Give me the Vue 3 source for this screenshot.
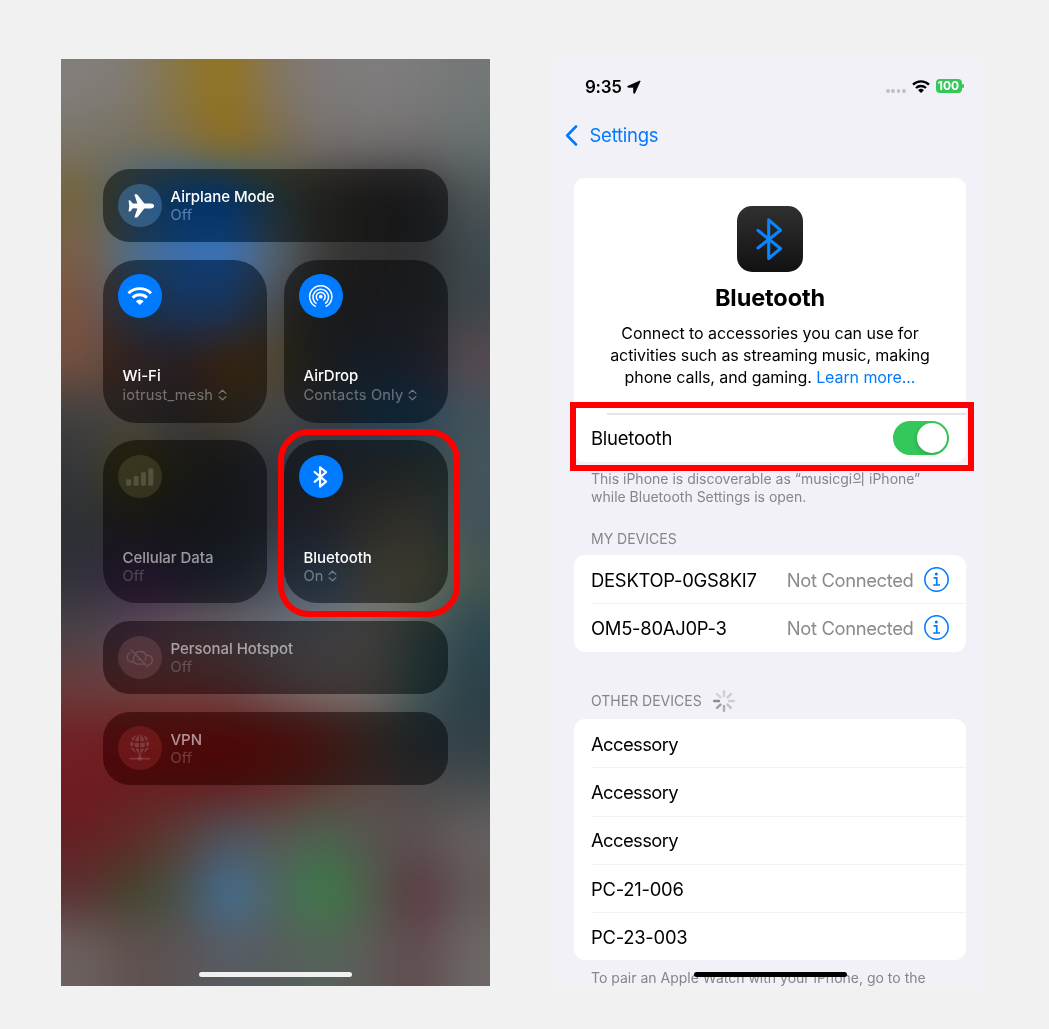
<script setup>
const palette = [
  '827e7a 807b72 887540 94731a 827664 7e7a7a 7f7c7c 7c7b7b 737777',
  '7a7468 75705f 80704b 906e18 7c6c4c 767070 757171 726f6f 687070',
  '74643c 46647a 1f5c9c 1a5aa2 46585a 3e3c34 2f2f2f 2d2e31 4e5557',
  '7a6048 50708a 3c70b0 3c76be 5a6670 3c3a38 323232 303032 3e4a4f',
  '7a5340 46607c 3e669a 3f669c 4e4c4a 323232 303236 323436 3c464a',
  '75503f 54433f 483c40 64442c 50462e 32343a 2e3640 343846 58494f',
  '42403e 484644 3a363c 474030 46484c 3a3d42 28445a 284860 43525a',
  '34363a 464018 32312c 2a2c2f 333842 30363e 3a3e42 3e4340 43555b',
  '2e3034 302e2e 282a2d 282b30 34363e 3c3e44 56544f 62605a 40525a',
  '30303a 3a2848 342c40 2c3844 4a4e5a 46607a 706e66 76725e 46564f',
  '4a4248 5a4858 6a5660 6c6268 6c6e78 78787c 7c7a78 505e5e 2c4850',
  '6a3c3c 6a4240 6e4443 6c4848 706060 7a7272 78726e 445a5a 2c4048',
  '701f26 701c1c 741a1a 701616 6b1e1c 642c26 50443e 3a4248 304046',
  '701a20 6a1e20 661e20 642020 642c2a 603c38 5c4a48 504c4a 4a4e50',
  '662024 602a28 584038 4e5662 585854 486650 585450 5a4f4f 666060',
  '5a3032 40462c 48504a 40709c 506460 388044 505c4c 5c3440 605a58',
  '6b605e 5e504e 5c5354 565c64 585c5c 546458 5e5a58 604a4e 6c6766',
].map((r) => r.split(' '))

const cw = 429 / 9
const ch = 927 / 17
// The dock rows sit a little higher than the regular grid.
const top = (r) => r * ch - (r >= 14 ? 12 : 0)
const cells = palette.flatMap((row, r) =>
  row.map((fill, c) => {
    const l = c === 0 ? -90 : c * cw
    const t = r === 0 ? -90 : top(r)
    const rr = c === 8 ? 519 : (c + 1) * cw + 1
    const b = r === 16 ? 1017 : top(r + 1) + 1
    return { x: l, y: t, w: rr - l, h: b - t, fill: '#' + fill }
  })
)

const devices = ['DESKTOP-0GS8KI7', 'OM5-80AJ0P-3']
const others = ['Accessory', 'Accessory', 'Accessory', 'PC-21-006', 'PC-23-003']
const spokes = [0.13, 0.15, 0.14, 0.2, 0.27, 0.34, 0.42, 0.13]
</script>

<template>
  <main class="page">
    <section class="phone control">
      <svg class="wall" viewBox="0 0 429 927" width="429" height="927">
        <defs>
          <filter id="soft" filterUnits="userSpaceOnUse" x="-90" y="-90" width="609" height="1107" color-interpolation-filters="sRGB">
            <feGaussianBlur stdDeviation="23" />
          </filter>
        </defs>
        <g filter="url(#soft)">
          <rect v-for="(c, i) in cells" :key="i" :x="c.x" :y="c.y" :width="c.w" :height="c.h" :fill="c.fill" />
        </g>
      </svg>

      <div class="tiles">
        <div class="tile wide">
          <span class="orb air">
            <svg viewBox="0 0 44 44"><path fill="#fff" d="M36.600 22.200c0-1.700-1.900-2.500-3.700-2.500h-6.300L19.900 11.100c-.4-.5-.8-.7-1.300-.7h-1.200c-.6 0-.8.4-.6 1l2.800 8.200-4.600.2-2.400-2.900c-.2-.3-.5-.4-.8-.4h-.5c-.4 0-.6.3-.6.700l.7 5-.7 5c0 .4.200.700.6.700h.5c.3 0 .6-.1.800-.4l2.400-2.900 4.600.2-2.800 8.200c-.2.600 0 1 .6 1h1.200c.5 0 .9-.2 1.300-.7l6.700-8.600h6.300c1.800 0 3.700-.8 3.700-2.500z"/></svg>
          </span>
          <div class="label"><b>Airplane Mode</b><span class="airoff">Off</span></div>
        </div>

        <div class="tile square">
          <span class="orb on">
            <svg viewBox="0 0 44 44" fill="none" stroke="#fff">
              <path stroke-width="3" d="M10.600 19.500a16.200 16.200 0 0 1 22.800 0M14.800 24a10.300 10.300 0 0 1 14.400 0"/>
              <path fill="#fff" stroke="none" d="M22 31.300l-4-3.800a5.600 5.600 0 0 1 8 0z"/>
            </svg>
          </span>
          <div class="label"><b>Wi-Fi</b><span>iotrust_mesh <svg class="sort" viewBox="0 0 10 13"><path d="M1.200 4.700L5 1.200l3.800 3.500M1.200 8.300L5 11.800l3.800-3.500"/></svg></span></div>
        </div>
        <div class="tile square">
          <span class="orb on">
            <svg viewBox="0 0 44 44" fill="none" stroke="#fff" stroke-width="1.550">
              <circle cx="22" cy="23" r="1.900" fill="#fff" stroke="none"/>
              <path d="M19.300 26.700a4.500 4.500 0 1 1 5.400 0M17.700 29.900a7.900 7.900 0 1 1 8.600 0M17 33a11.200 11.200 0 1 1 10 0"/>
            </svg>
          </span>
          <div class="label"><b>AirDrop</b><span>Contacts Only <svg class="sort" viewBox="0 0 10 13"><path d="M1.200 4.700L5 1.200l3.800 3.500M1.200 8.300L5 11.800l3.800-3.500"/></svg></span></div>
        </div>

        <div class="tile square dim low">
          <span class="orb cell">
            <svg viewBox="0 0 44 44" fill="#fff" fill-opacity=".15"><rect x="8.300" y="24.500" width="5" height="6.500" rx="1.300"/><rect x="15.800" y="21.300" width="5" height="9.700" rx="1.300"/><rect x="23.200" y="17.500" width="5" height="13.500" rx="1.300"/><rect x="30.700" y="13.500" width="5" height="17.500" rx="1.300"/></svg>
          </span>
          <div class="label"><b>Cellular Data</b><span>Off</span></div>
        </div>
        <div class="tile square low">
          <span class="orb on">
            <svg viewBox="0 0 44 44" fill="none" stroke="#fff" stroke-width="2.200" stroke-linejoin="round" stroke-linecap="round"><path d="M15.800 17.200l11.600 9.700-6.100 5V12.400l6.100 5L15.800 27.200"/></svg>
          </span>
          <div class="label"><b>Bluetooth</b><span>On <svg class="sort" viewBox="0 0 10 13"><path d="M1.200 4.700L5 1.200l3.800 3.500M1.200 8.300L5 11.800l3.800-3.500"/></svg></span></div>
          <i class="ring"></i>
        </div>

        <div class="tile wide dim">
          <span class="orb spot">
            <svg viewBox="0 0 44 44" fill="none" stroke="#fff" stroke-opacity=".14" stroke-width="1.400" stroke-linecap="round"><path d="M15.800 26.300h-2a4.900 4.900 0 0 1-1.200-9.500M18 17.200c1-1 2.200-1.500 3.800-1.500h1.700a5 5 0 0 1 3.600 8.300M26 28.500h-5.700a5 5 0 0 1-1.800-9.600M28.500 19.500h1.700a4.900 4.900 0 0 1 .9 9.600M13 13.800l17 17M20.300 23.900h2.500"/></svg>
          </span>
          <div class="label"><b>Personal Hotspot</b><span>Off</span></div>
        </div>

        <div class="tile wide dim">
          <span class="orb vpn">
            <svg viewBox="0 0 44 44" fill="none"><circle cx="22" cy="18.300" r="9.700" fill="#fff" fill-opacity=".15"/><path stroke="#5f1014" stroke-width="1.100" d="M12.700 14.800c6 2.300 12.500 2.300 18.600 0M12.500 20.500c6 2.600 13 2.600 19 0M22 8.700v19M19.500 9c-4.500 6-4.500 13 0 18.500M24.500 9c4.500 6 4.500 13 0 18.500"/><path stroke="#fff" stroke-opacity=".15" stroke-width="1.900" d="M11.800 33h20.400M22 28v3"/><circle cx="22" cy="33" r="2.400" fill="#fff" fill-opacity=".1"/></svg>
          </span>
          <div class="label"><b>VPN</b><span>Off</span></div>
        </div>
      </div>
      <i class="home"></i>
    </section>

    <section class="phone settings">
      <header class="status">
        <span class="time">9:35</span>
        <svg class="loc" viewBox="0 0 14 14"><path stroke="#000" stroke-width=".8" stroke-linejoin="round" d="M13 .9L.9 6.300c-.5.300-.4.900.2.900l5.500.1.100 5.600c0 .6.800.7 1 .2L13.200 1z"/></svg>
        <span class="dots"><i></i><i></i><i></i><i></i></span>
        <svg class="wifi" viewBox="0 0 18 13"><g fill="none" stroke="#000" stroke-width="2.300"><path d="M1 4.700a11.500 11.500 0 0 1 16 0M4 8a7.200 7.200 0 0 1 10 0"/></g><path d="M9 12.900l-2.900-2.700a4.200 4.200 0 0 1 5.800 0z"/></svg>
        <span class="batt">100</span><i class="nub"></i>
      </header>

      <nav class="back">
        <svg viewBox="0 0 13 21"><path d="M11 1.500L2.200 10.500 11 19.500"/></svg><span>Settings</span>
      </nav>

      <div class="card intro">
        <span class="app">
          <svg viewBox="0 0 66 66" fill="none" stroke="#0a84ff" stroke-width="3.100" stroke-linejoin="round" stroke-linecap="round"><path d="M21 24.500l22.500 18L31.700 52.500V13.800l11.800 10.400L21 42"/></svg>
        </span>
        <h1>Bluetooth</h1>
        <p>Connect to accessories you can use for<br>activities such as streaming music, making<br>phone calls, and gaming. <a>Learn more...</a></p>
        <div class="power">
          <span>Bluetooth</span>
          <span class="switch"><i></i></span>
          <i class="frame"></i>
        </div>
      </div>
      <p class="note">This iPhone is discoverable as “musicgi의 iPhone”<br>while Bluetooth Settings is open.</p>

      <h2 class="my">MY DEVICES</h2>
      <div class="card">
        <div v-for="d in devices" :key="d" class="row">
          <span class="name">{{ d }}</span><span class="state">Not Connected</span>
          <svg class="info" viewBox="0 0 24 24"><circle cx="12" cy="12" r="11.200" fill="none" stroke="#007aff" stroke-width="1.500"/><circle cx="11.800" cy="6.700" r="1.500" fill="#007aff"/><path fill="none" stroke="#007aff" stroke-width="1.600" d="M9.200 10.500h3v7M8.800 17.300h6.600"/></svg>
        </div>
      </div>

      <h2 class="other">OTHER DEVICES
        <svg class="spin" viewBox="0 0 22 22"><rect v-for="(o, i) in spokes" :key="i" x="9.750" y="0" width="2.500" height="7.200" rx="1.200" fill="#000" :fill-opacity="o" :transform="`rotate(${i * 45} 11 11)`"/></svg>
      </h2>
      <div class="card">
        <div v-for="(d, i) in others" :key="i" class="row"><span class="name" :class="{ word: d === 'Accessory' }">{{ d }}</span></div>
      </div>
      <p class="note pair">To pair an Apple Watch with your iPhone, go to the</p>
      <i class="home dark"></i>
    </section>
  </main>
</template>

<style>
body { background: #f1f1f1; }
</style>

<style scoped>
* { box-sizing: border-box; }
.page {
  width: 1049px; height: 1029px; padding: 59px 65px 0 61px;
  display: flex; justify-content: space-between; overflow: hidden;
  background: #f1f1f1;
  font-family: Inter, "Noto Sans CJK KR", sans-serif;
}
.phone { position: relative; width: 429px; height: 927px; overflow: hidden; }
.wall { position: absolute; left: 0; top: 0; display: block; }
.tiles {
  position: relative; padding: 110px 42px 0; display: flex; flex-wrap: wrap;
  gap: 17.400px 17px;
}
.tile { position: relative; border-radius: 27px; backdrop-filter: saturate(1.6) brightness(.51); display: flex; color: #fff; }
.wide { width: 345px; height: 73.300px; padding: 14.500px 15px; align-items: flex-start; }
.square { width: 164px; height: 163.400px; border-radius: 34px; padding: 14.500px 15px 0; flex-direction: column; justify-content: space-between; }
.orb { width: 43.500px; height: 43.500px; border-radius: 50%; flex: none; }
.orb svg { display: block; width: 100%; height: 100%; }
.on { background: #007aff; }
.air { background: rgba(84,146,202,.42); }
.cell { background: rgba(150,145,100,.2); }
.spot { background: rgba(220,150,155,.17); }
.vpn { background: rgba(205,60,65,.25); }
.label { display: flex; flex-direction: column; line-height: 18.300px; font-size: 15px; letter-spacing: -.05px; }
.label b { font-weight: 500; }
.label span { color: rgba(255,255,255,.37); white-space: nowrap; font-size: 14.600px; letter-spacing: .18px; }
.label .airoff { color: rgba(170,205,255,.5); }
.wide .label { margin: 4.200px 0 0 9px; }
.square .label { margin: 0 0 19px 4.500px; }
.low .label { margin-bottom: 18.500px; }
.dim b { color: rgba(255,255,255,.56); }
.dim .label span { color: rgba(255,255,255,.21); }
.sort { width: 9px; height: 12px; vertical-align: -1px; margin-left: .5px; fill: none; stroke: rgba(255,255,255,.38); stroke-width: 1.400; stroke-linecap: round; stroke-linejoin: round; }
.ring { position: absolute; left: -6px; top: -11px; width: 182px; height: 188px; border: 6px solid #f00; border-radius: 31px; }
.home { position: absolute; left: 138px; top: 912.500px; width: 153px; height: 5.500px; border-radius: 3px; background: #f1f0f0; }
.dark { background: #000; left: 139px; }

.settings { background: #f2f1f7; color: #000; padding: 0 19px 0; }
.status { height: 24px; margin-top: 16px; display: flex; align-items: center; padding-left: 11px; }
.time { font-size: 17px; font-weight: 600; line-height: 24px; letter-spacing: -.25px; }
.loc { width: 14px; height: 14px; margin: -1px 0 0 5px; }
.dots { margin-left: auto; display: flex; gap: 1.200px; padding-top: 8px; }
.dots i { width: 3.900px; height: 3.900px; border-radius: 50%; background: #bfbfc4; }
.wifi { width: 18px; height: 13px; margin-left: 6px; margin-top: -2px; }
.batt { width: 26px; height: 14px; margin-left: 6px; margin-top: -2px; border-radius: 4px; background: #34c759; color: #fff; font-size: 12px; font-weight: 700; line-height: 14px; text-align: center; }
.nub { width: 1.500px; height: 4px; margin: -2px 1.500px 0 .5px; border-radius: 1px; background: #34c759; }
.back { margin: 24px 0 0 -9px; height: 24px; display: flex; align-items: center; color: #007aff; font-size: 18.500px; }
.back svg { width: 13px; height: 21px; fill: none; stroke: #007aff; stroke-width: 2.600; stroke-linecap: round; stroke-linejoin: round; }
.back span { margin-left: 11.500px; letter-spacing: -.25px; }
.card { width: 392px; background: #fff; border-radius: 11px; }
.intro { height: 284px; margin-top: 31px; padding-top: 28px; text-align: center; }
.app { display: block; width: 66px; height: 66px; margin: 0 auto; border-radius: 15px; background: linear-gradient(#303030, #111); }
h1 { margin: 11px 0 0; font-size: 23.500px; line-height: 30px; font-weight: 700; letter-spacing: -.1px; }
.intro p { margin: 9px 0 0; font-size: 16px; line-height: 22px; letter-spacing: -.08px; white-space: nowrap; }
a { color: #007aff; }
.power { position: relative; height: 49px; margin-top: 25px; padding: 0 17px; display: flex; align-items: center; justify-content: space-between; font-size: 18.500px; letter-spacing: -.25px; }
.power::before { content: ""; position: absolute; left: 33px; right: 0; top: 0; height: 2px; background: #e5e5e7; }
.switch { position: relative; width: 56px; height: 34px; border-radius: 17px; background: #34c759; }
.switch i { position: absolute; right: 2px; top: 2px; width: 30px; height: 30px; border-radius: 50%; background: #fff; box-shadow: -1px 2px 4px rgba(0,0,0,.15); }
.frame { position: absolute; left: -4px; top: -11px; width: 404px; height: 69px; border: 6px solid #f00; }
.note { margin: 8.300px 0 0 17px; font-size: 14px; line-height: 17.700px; color: #85858b; white-space: nowrap; }
h2 { margin: 0 0 0 17px; font-size: 14px; line-height: 18px; font-weight: 400; color: #85858b; display: flex; align-items: center; }
.my { margin-top: 24.300px; margin-bottom: 7.200px; }
.other { margin-top: 38.500px; height: 22px; margin-bottom: 7px; }
.spin { width: 22px; height: 22px; margin-left: 11px; }
.row { position: relative; height: 48.250px; padding: 1px 17px 0; display: flex; align-items: center; font-size: 18.400px; }
.row + .row::before { content: ""; position: absolute; left: 17px; right: 0; top: 0; height: 1px; background: #f3f3f5; }
.name { letter-spacing: -.25px; }
.word { letter-spacing: -.6px; }
.state { margin-left: auto; color: #8a8a8e; letter-spacing: -.35px; }
.info { width: 25px; height: 25px; margin: -1px .5px 0 10px; }
.pair { margin-top: 9px; }
</style>
